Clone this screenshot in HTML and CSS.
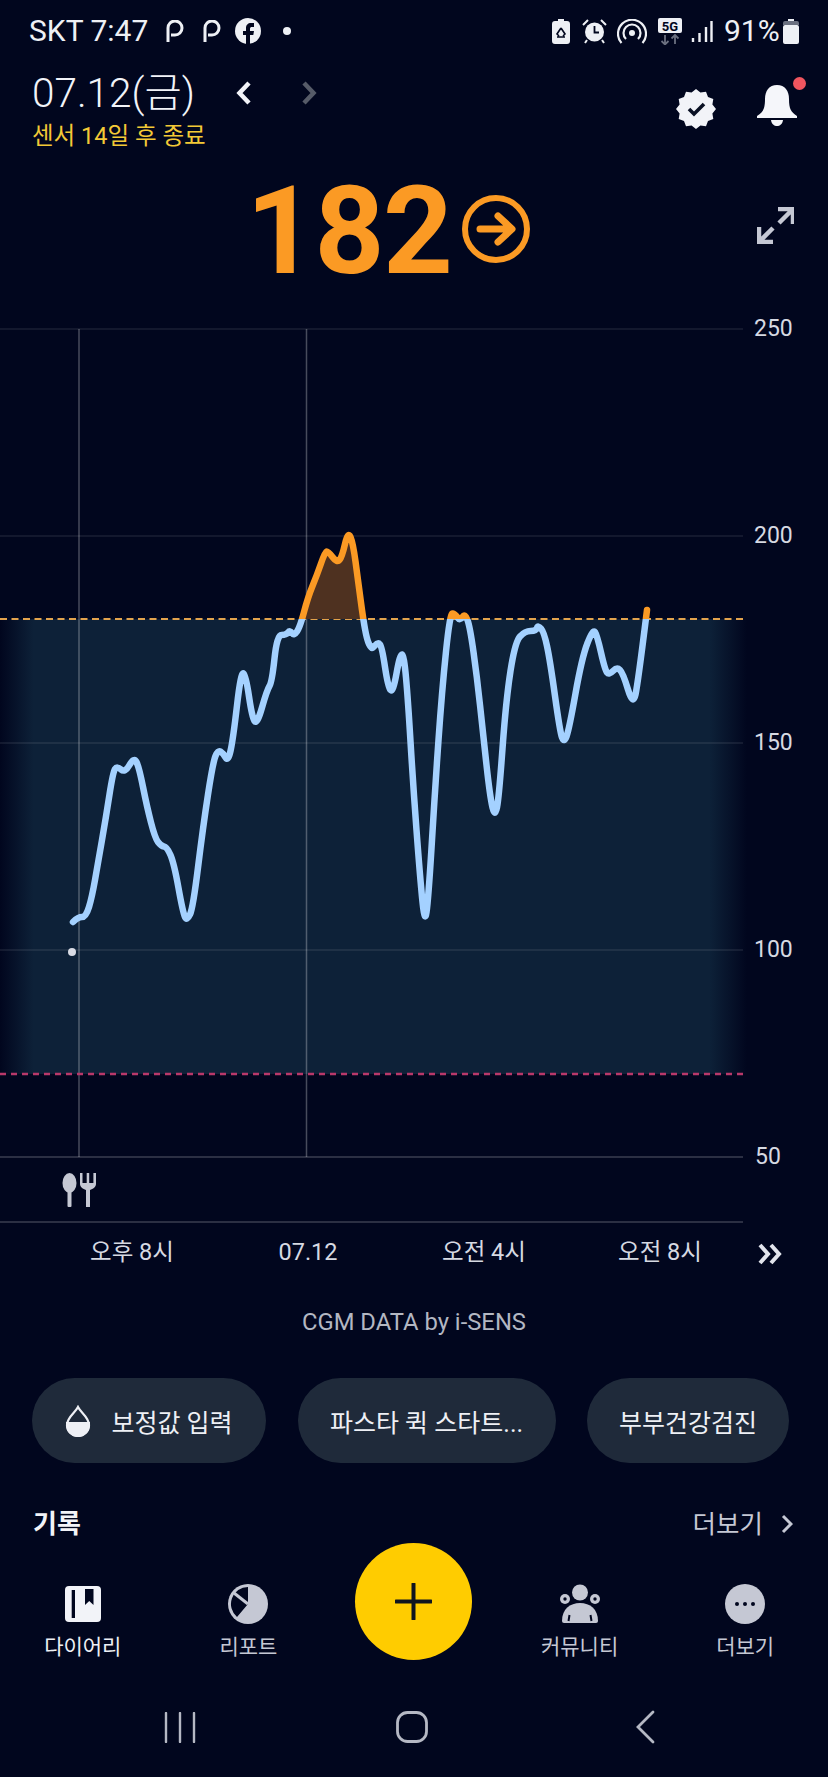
FILE: index.html
```html
<!DOCTYPE html>
<html lang="ko">
<head>
<meta charset="utf-8">
<title>CGM</title>
<link rel="stylesheet" href="styles.css">
</head>
<body>
<div class="phone">
  <div class="status">
    <div class="status-left">
      <span class="carrier">SKT 7:47</span>
      <svg class="ic-p" viewBox="0 0 18 22"><path d="M2 22V8a7 7 0 1 1 7 7H5" /></svg>
      <svg class="ic-p" viewBox="0 0 18 22"><path d="M2 22V8a7 7 0 1 1 7 7H5" /></svg>
      <svg class="ic-fb" viewBox="0 0 26 26"><circle cx="13" cy="13" r="13" fill="#eef0f5"/><path d="M11 26V17H8v-4h3v-3c0-3 2-5 5-5h3v4h-2c-1.400 0-2 .6-2 2v2h4l-.7 4H15v9z" fill="#01061e"/></svg>
      <span class="dot"></span>
    </div>
    <div class="status-right">
      <svg class="si" width="18" height="25" viewBox="0 0 18 25"><path d="M6 0h6v2h3a3 3 0 0 1 3 3v17a3 3 0 0 1-3 3H3a3 3 0 0 1-3-3V5a3 3 0 0 1 3-3h3z" fill="#eef0f5"/><path d="M9 9l-4 6 2 2M9 9l4 6-2 2M5 18h8" stroke="#01061e" stroke-width="1.600" fill="none"/></svg>
      <svg class="si si-alarm" width="25" height="25" viewBox="0 0 25 25"><circle cx="12.500" cy="13" r="9.500" fill="#eef0f5"/><path d="M12.500 7v6.500H17" stroke="#01061e" stroke-width="1.800" fill="none"/><path d="M1 6l5-5M24 6l-5-5M5 21l-2 3M20 21l2 3" stroke="#eef0f5" stroke-width="2" fill="none"/></svg>
      <svg class="si si-hot" width="30" height="25" viewBox="0 0 30 25"><circle cx="15" cy="14" r="3" fill="#eef0f5"/><path d="M9 20a8.500 8.500 0 1 1 12 0M4.500 24a14 14 0 1 1 21 0" stroke="#eef0f5" stroke-width="2.200" fill="none"/></svg>
      <svg class="si si-5g" width="24" height="27" viewBox="0 0 24 27"><rect width="24" height="15" rx="2" fill="#eef0f5"/><text x="12" y="12.500" class="fiveg">5G</text><path d="M7 17v9M3.500 23l3.500 3.500 3.500-3.500" stroke="#6b7080" stroke-width="1.800" fill="none"/><path d="M17 26v-9M13.500 20.500L17 17l3.500 3.500" stroke="#6b7080" stroke-width="1.800" fill="none"/></svg>
      <svg class="si si-sig" width="22" height="23" viewBox="0 0 22 23"><path d="M2 18v4M8.500 13v9M15 7v15M20.500 1v21" stroke="#eef0f5" stroke-width="2.400"/></svg>
      <span class="pct">91%</span>
      <svg class="si si-bat" width="16" height="25" viewBox="0 0 16 25"><path d="M5 0h6v2H5zM2 6h12a2 2 0 0 1 2 2v15a2 2 0 0 1-2 2H2a2 2 0 0 1-2-2V8a2 2 0 0 1 2-2z" fill="#eef0f5"/><path d="M2 2h12a2 2 0 0 1 2 2v2H0V4a2 2 0 0 1 2-2z" fill="#6b7080"/></svg>
    </div>
  </div>

  <header class="head">
    <div class="head-left">
      <div class="date-row">
        <span class="date">07.12(금)</span>
        <svg class="chev" viewBox="0 0 16 26"><path d="M13 3L3.500 13 13 23" stroke="#f2f3f8"/></svg>
        <svg class="chev chev-next" viewBox="0 0 16 26"><path d="M3 3l9.500 10L3 23" stroke="#565b68"/></svg>
      </div>
      <div class="sensor">센서 14일 후 종료</div>
    </div>
    <div class="head-right">
      <svg class="badge" viewBox="-20 -20 40 40"><polygon fill="#f2f3f8" points="20,0 16.400,4.400 17.300,10 12,12 10,17.300 4.400,16.400 0,20 -4.400,16.400 -10,17.300 -12,12 -17.300,10 -16.400,4.400 -20,0 -16.400,-4.400 -17.300,-10 -12,-12 -10,-17.300 -4.400,-16.400 0,-20 4.400,-16.400 10,-17.300 12,-12 17.300,-10 16.400,-4.400"/><path d="M-7 0l5 5L8 -5" stroke="#0a1024" stroke-width="3.600" fill="none"/></svg>
      <div class="bell-wrap">
        <svg class="bell" viewBox="0 0 40 41"><path d="M20 0C28 0 32 6 32 14 32 24 34 27 40 31 41 33 40 33 39 33H1C0 33-1 33 0 31 6 27 8 24 8 14 8 6 12 0 20 0Z" fill="#f5f6fa"/><path d="M14 35H26C25 43 15 43 14 35Z" fill="#f5f6fa"/></svg>
        <span class="bell-dot"></span>
      </div>
    </div>
  </header>

  <section class="value-row">
    <span class="value">182</span>
    <svg class="trend" viewBox="0 0 68 68"><circle cx="34" cy="34" r="31" fill="none" stroke="#fb9a24" stroke-width="6"/><path d="M18 34H49M36 21L50 34 36 47" stroke="#fb9a24" stroke-width="7" fill="none" stroke-linecap="round" stroke-linejoin="round"/></svg>
    <svg class="expand" viewBox="0 0 37 37"><path d="M21 2H36V17M35 3L22 16M16 35H2V20M3 34L16 21" stroke="#c5c8d4" stroke-width="4.500" fill="none"/></svg>
  </section>

  <svg class="chart" viewBox="0 300 828 930">
    <defs>
      <linearGradient id="band" x1="0" x2="747" y1="0" y2="0" gradientUnits="userSpaceOnUse">
        <stop offset="0" stop-color="#01061e"/>
        <stop offset="0.045" stop-color="#0d2138"/>
        <stop offset="0.95" stop-color="#0d2138"/>
        <stop offset="1" stop-color="#01061e"/>
      </linearGradient>
      <clipPath id="above"><rect x="0" y="300" width="828" height="319"/></clipPath>
      <clipPath id="below"><rect x="0" y="619" width="828" height="600"/></clipPath>
      <path id="curve" d="M73 922Q78 917 82 917Q86 917 89 907Q92 897 95 880Q98 863 102 840Q106 817 109.500 794.500Q113 772 115 769Q117 766 121 769.500Q125 773 129.500 765Q134 757 136.500 762Q139 767 143 787Q147 807 151 822.500Q155 838 158 842Q161 846 164 846.500Q167 847 170.500 855Q174 863 178.500 888Q183 913 185 917Q187 921 190 914.500Q193 908 198 867.500Q203 827 208 794.500Q213 762 215.500 756Q218 750 220.500 751.500Q223 753 225.500 757.500Q228 762 230.500 751Q233 740 237 705.500Q241 671 243.500 673.500Q246 676 249 696.500Q252 717 254.500 721Q257 725 262 707.500Q267 690 269.500 686Q272 682 274.500 658.500Q277 635 281.500 635Q286 635 288 632.500Q290 630 292 633Q294 636 297 631.500Q300 627 304 612Q308 597 312.500 586Q317 575 321 563.500Q325 552 326.500 551.500Q328 551 332.500 557Q337 563 339.500 560Q342 557 345 544Q348 531 350.500 537Q353 543 355.500 561.500Q358 580 360.500 599Q363 618 365 629Q367 640 369 644Q371 648 372 648Q373 648 375.500 645Q378 642 380 644.500Q382 647 385 667Q388 687 390.500 690Q393 693 396.500 673.500Q400 654 402 654.500Q404 655 406 677.500Q408 700 410.500 741.500Q413 783 416.500 830Q420 877 422.500 902Q425 927 427 908.500Q429 890 432 840Q435 790 438.500 740Q442 690 446 651.500Q450 613 452.500 613.500Q455 614 457.500 617.500Q460 621 462.500 617Q465 613 467.500 620Q470 627 473.500 652Q477 677 480 705Q483 733 486.500 765Q490 797 492.500 807.500Q495 818 497 807.500Q499 797 502.500 748.500Q506 700 510.500 671Q515 642 520 636.500Q525 631 530.500 631Q536 631 537 628Q538 625 541 628.500Q544 632 547 646Q550 660 555 696Q560 732 562 737.500Q564 743 566.500 736.500Q569 730 575.500 693.500Q582 657 587.500 643Q593 629 595 632Q597 635 601 652.500Q605 670 607 672.500Q609 675 613 671Q617 667 620 670Q623 673 628 689.500Q633 706 635.500 694.500Q638 683 647 610"/>
    </defs>
    <rect x="0" y="619" width="747" height="455" fill="url(#band)"/>
    <g class="grid">
      <line x1="0" x2="743" y1="329" y2="329"/>
      <line x1="0" x2="743" y1="536" y2="536"/>
      <line x1="0" x2="743" y1="743" y2="743"/>
      <line x1="0" x2="743" y1="950" y2="950"/>
      <line class="strong" x1="0" x2="743" y1="1157" y2="1157"/>
      <line class="strong" x1="0" x2="743" y1="1222" y2="1222"/>
    </g>
    <g class="vert">
      <line x1="79" x2="79" y1="329" y2="1157"/>
      <line x1="306.500" x2="306.500" y1="329" y2="1157"/>
    </g>
    <line class="hi" x1="0" x2="743" y1="619" y2="619"/>
    <line class="lo" x1="0" x2="743" y1="1074" y2="1074"/>
    <circle cx="72" cy="952" r="4" fill="#d8dbe4"/>
    <polygon clip-path="url(#above)" fill="#4e3120" points="300,627 308,597 317,575 325,553 328,552 337,562 342,557 348,535 353,543 358,580 363,619"/>
    <g clip-path="url(#below)"><use class="curve curve-blue" href="#curve"/></g>
    <g clip-path="url(#above)"><use class="curve curve-orange" href="#curve"/></g>
    <g class="ylab">
      <text x="754" y="336">250</text>
      <text x="754" y="543">200</text>
      <text x="754" y="750">150</text>
      <text x="754" y="957">100</text>
      <text x="755" y="1164">50</text>
    </g>
    <g transform="translate(62 1173)" fill="#c5c8d4">
      <ellipse cx="7.500" cy="10" rx="7" ry="10"/>
      <rect x="5.500" y="14" width="4" height="20" rx="1"/>
      <path d="M18 0h2.500v10h4.200V0h2.500v10h4.200V0H34v11c0 3-3 5-6 6v17h-4V17c-3-1-6-3-6-6z"/>
    </g>
  </svg>

  <div class="xaxis">
    <span class="xl">오후 8시</span>
    <span class="xl">07.12</span>
    <span class="xl">오전 4시</span>
    <span class="xl">오전 8시</span>
    <svg class="more-x" viewBox="0 0 26 22"><path d="M3 2l8 9-8 9M14 2l8 9-8 9" stroke="#e2e4ec" stroke-width="4" fill="none"/></svg>
  </div>

  <div class="credit">CGM DATA by i-SENS</div>

  <div class="chips">
    <div class="chip chip-a">
      <svg class="drop" viewBox="0 0 26 32"><path d="M13 2C10 8 2 12 2 20a11 11 0 0 0 22 0C24 12 16 8 13 2Z" fill="none" stroke="#eef0f5" stroke-width="2.200"/><path d="M1 17h24v3a12 12 0 0 1-24 0z" fill="#eef0f5"/></svg>
      <span>보정값 입력</span>
    </div>
    <div class="chip chip-b">파스타 퀵 스타트...</div>
    <div class="chip chip-c">부부건강검진</div>
  </div>

  <div class="section-row">
    <span class="sec-title">기록</span>
    <span class="sec-more">더보기<svg class="sec-chev" viewBox="0 0 12 20"><path d="M2 2l8 8-8 8" stroke="#c5c8d4" stroke-width="3" fill="none"/></svg></span>
  </div>

  <nav class="tabs">
    <div class="tab tab-on">
      <svg class="tab-ic" viewBox="0 0 40 40"><rect x="2" y="2" width="36" height="36" rx="4" fill="#f2f3f8"/><rect x="8.700" y="6" width="3.300" height="28" fill="#01061e"/><path d="M22 5h8.500v16l-4.250-4-4.250 4z" fill="#01061e"/></svg>
      <span>다이어리</span>
    </div>
    <div class="tab">
      <svg class="tab-ic" viewBox="0 0 40 40"><circle cx="20" cy="20" r="20" fill="#c5c8d4"/><path d="M20 20L20 3A17 17 0 0 0 9 33Z" fill="#01061e"/><path d="M20 20L6 9" stroke="#c5c8d4" stroke-width="3"/></svg>
      <span>리포트</span>
    </div>
    <div class="tab tab-gap"></div>
    <div class="tab">
      <svg class="tab-ic" viewBox="0 0 40 40"><circle cx="20" cy="8.500" r="8" fill="#c5c8d4"/><circle cx="5" cy="15" r="5" fill="#c5c8d4"/><circle cx="35" cy="15" r="5" fill="#c5c8d4"/><circle cx="5" cy="15" r="1.700" fill="#01061e"/><circle cx="35" cy="15" r="1.700" fill="#01061e"/><path d="M2 37C2 25 10 19 20 19S38 25 38 37q0 2-2 2H4q-2 0-2-2z" fill="#c5c8d4"/><path d="M8.500 37l1-6M31.500 37l-1-6" stroke="#01061e" stroke-width="2"/></svg>
      <span>커뮤니티</span>
    </div>
    <div class="tab">
      <svg class="tab-ic" viewBox="0 0 40 40"><circle cx="20" cy="20" r="20" fill="#c5c8d4"/><circle cx="12" cy="20" r="2" fill="#01061e"/><circle cx="20" cy="20" r="2" fill="#01061e"/><circle cx="28" cy="20" r="2" fill="#01061e"/></svg>
      <span>더보기</span>
    </div>
    <button class="fab" type="button"><svg viewBox="0 0 37 37"><path d="M18.500 1v35M1 18.500h35" stroke="#10151f" stroke-width="4" stroke-linecap="round"/></svg></button>
  </nav>

  <div class="sysnav">
    <svg class="sys-a" viewBox="0 0 32 31"><path d="M2 1v29M16 1v29M30 1v29" stroke="#b5b8c4" stroke-width="2.400" stroke-linecap="round"/></svg>
    <svg class="sys-b" viewBox="0 0 32 32"><rect x="1.500" y="1.500" width="29" height="29" rx="10" fill="none" stroke="#b5b8c4" stroke-width="2.800"/></svg>
    <svg class="sys-c" viewBox="0 0 20 34"><path d="M18 2L3 17l15 15" stroke="#b5b8c4" stroke-width="2.800" fill="none" stroke-linecap="round"/></svg>
  </div>
</div>
</body>
</html>
```

FILE: styles.css
```css
* { box-sizing: border-box; }
html, body { margin: 0; padding: 0; background: #01061e; }
.phone {
  width: 828px; height: 1777px; overflow: hidden; position: relative;
  display: flex; flex-direction: column;
  background: #01061e; color: #eef0f5;
  font-family: Roboto, "Noto Sans CJK KR", sans-serif;
}
svg { display: block; flex: none; }

.status { height: 62px; padding: 0 29px; display: flex; align-items: center; justify-content: space-between; }
.status-left { display: flex; align-items: center; }
.carrier { font-size: 30px; line-height: 32px; width: 137px; }
.ic-p { width: 18px; height: 22px; margin-right: 19px; margin-top: 0; }
.ic-p path { fill: none; stroke: #eef0f5; stroke-width: 3; }
.ic-fb { width: 26px; height: 26px; margin-left: -5px; }
.dot { width: 8px; height: 8px; border-radius: 50%; background: #eef0f5; margin-left: 22px; }
.status-right { display: flex; align-items: center; }
.si-alarm { margin-left: 12px; }
.si-hot { margin-left: 10px; }
.si-5g { margin-left: 11px; }
.si-sig { margin-left: 9px; }
.pct { font-size: 30px; line-height: 32px; margin-left: 11px; width: 59px; }
.si-bat { margin-left: 0; }
.fiveg { font: 700 13px Roboto, sans-serif; fill: #01061e; text-anchor: middle; }

.head { height: 94px; padding: 8px 31px 0 32px; display: flex; justify-content: space-between; }
.date-row { display: flex; align-items: center; height: 46px; }
.date { font-size: 40.500px; font-weight: 300; line-height: 46px; width: 204px; color: #f2f3f8; }
.chev { width: 16px; height: 26px; }
.chev path { fill: none; stroke-width: 4.500; }
.chev-next { margin-left: 49px; }
.sensor { margin-top: 6px; font-size: 23.500px; line-height: 28px; color: #f3c936; }
.head-right { display: flex; align-items: flex-start; padding-top: 6px; }
.badge { width: 40px; height: 40px; margin-right: 41px; margin-top: 13px; }
.bell-wrap { position: relative; width: 40px; height: 41px; margin-top: 9px; }
.bell { width: 40px; height: 41px; }
.bell-dot { position: absolute; width: 13px; height: 13px; border-radius: 50%; background: #f0555f; left: 36px; top: -8px; }

.value-row { height: 144px; position: relative; display: flex; align-items: flex-start; padding-left: 246px; }
.value { font-size: 122px; font-weight: 700; line-height: 152px; color: #fb9a24; letter-spacing: -1.500px; }
.trend { width: 68px; height: 68px; margin-left: 10px; margin-top: 39px; }
.expand { width: 37px; height: 37px; margin-left: auto; margin-right: 34px; margin-top: 51px; }

.chart { width: 828px; height: 930px; }
.grid line { stroke: rgba(255,255,255,.1); stroke-width: 1.500; }
.grid line.strong { stroke: rgba(255,255,255,.17); stroke-width: 2; }
.vert line { stroke: rgba(255,255,255,.28); stroke-width: 1.500; }
.hi { stroke: #e3a34d; stroke-width: 2; stroke-dasharray: 7 4.500; }
.lo { stroke: #b8386a; stroke-width: 2.500; stroke-dasharray: 6 5; }
.curve { fill: none; stroke-width: 6.500; stroke-linejoin: round; stroke-linecap: round; }
.curve-blue { stroke: #a4d1ff; }
.curve-orange { stroke: #fb9a24; }
.ylab text { font-size: 23px; fill: #d6d9e2; }

.xaxis { height: 46px; padding-left: 44px; display: flex; align-items: center; position: relative; }
.xl { width: 176px; text-align: center; font-size: 23.500px; color: #d6d9e2; line-height: 30px; margin-top: -2px; }
.more-x { width: 26px; height: 22px; margin-left: 9px; margin-top: 2px; }

.credit { margin-top: 30px; height: 32px; line-height: 32px; text-align: center; font-size: 23.800px; color: #b3b7c2; }

.chip { height: 85px; border-radius: 42.500px; background: #1f2a3a; display: flex; align-items: center; justify-content: center; font-size: 25px; color: #eef0f5; white-space: nowrap; }
.chips { margin-top: 40px; padding: 0 39px 0 32px; display: flex; justify-content: space-between; }
.chip-a { width: 234px; gap: 20px; }
.chip-b { width: 258px; }
.chip-c { width: 202px; }
.drop { width: 26px; height: 32px; }

.section-row { margin-top: 45px; height: 32px; padding: 0 35px 0 33px; display: flex; align-items: center; justify-content: space-between; }
.sec-title { font-size: 26px; font-weight: 700; color: #f2f3f8; line-height: 32px; }
.sec-more { display: flex; align-items: center; gap: 18px; font-size: 25.500px; color: #c5c8d4; line-height: 32px; }
.sec-chev { width: 12px; height: 20px; }

.tabs { position: relative; margin-top: 44px; display: grid; grid-template-columns: repeat(5, 1fr); height: 80px; }
.tab { display: flex; flex-direction: column; align-items: center; font-size: 21px; line-height: 30px; color: #c5c8d4; }
.tab-on { color: #eef0f5; }
.tab-ic { width: 40px; height: 40px; margin-bottom: 8px; }
.fab { position: absolute; left: 355px; top: -41px; width: 117px; height: 117px; border-radius: 50%; background: #ffcc00; border: 0; padding: 0; display: flex; align-items: center; justify-content: center; }
.fab svg { width: 37px; height: 37px; }

.sysnav { margin-top: 46px; position: relative; height: 34px; display: flex; align-items: center; padding-left: 164px; }
.sys-a { width: 32px; height: 31px; }
.sys-b { width: 32px; height: 32px; margin-left: 200px; }
.sys-c { width: 20px; height: 34px; margin-left: 207px; }
```
